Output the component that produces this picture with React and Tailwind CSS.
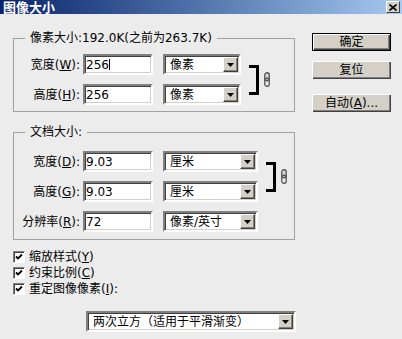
import React from 'react';

const FONT = "font-['DejaVu_Sans','Noto_Sans_CJK_SC',sans-serif]";

function DropArrow() {
  return (
    <div className="flex items-center justify-center w-[15px] h-[15px] mr-[1px] bg-[#d4d0c8] border border-t-white border-l-white border-b-[#404040] border-r-[#404040] shadow-[inset_-1px_-1px_0_#808080]">
      <svg width="7" height="4" viewBox="0 0 7 4">
        <polygon points="0,0 7,0 3.5,4" fill="#000" />
      </svg>
    </div>
  );
}

function Select({ value, className }) {
  return (
    <div
      className={`flex items-center h-[21px] bg-white border-2 border-t-[#808080] border-l-[#808080] border-b-white border-r-white shadow-[inset_1px_1px_0_#404040,inset_-1px_-1px_0_#d4d0c8] ${className}`}
    >
      <span className="flex-1 pl-[5px] leading-none whitespace-nowrap">{value}</span>
      <DropArrow />
    </div>
  );
}

function Field({ value, caret, className }) {
  return (
    <div
      className={`flex items-center h-[21px] w-[70px] bg-white border-2 border-t-[#808080] border-l-[#808080] border-b-white border-r-white shadow-[inset_1px_1px_0_#404040,inset_-1px_-1px_0_#d4d0c8] ${className}`}
    >
      <span className="pl-[1px] leading-none">{value}</span>
      {caret && <span className="w-px h-[11px] bg-black" />}
    </div>
  );
}

function Row({ label, keyChar, value, unit, selectWidth, caret }) {
  return (
    <div className="flex items-center h-[21px]">
      <span className="w-[66px] text-right whitespace-nowrap leading-none">
        {label}(<span className="underline">{keyChar}</span>):
      </span>
      <Field className="ml-[3px]" value={value} caret={caret} />
      <Select className={`ml-[10px] ${selectWidth}`} value={unit} />
    </div>
  );
}

function Link() {
  return (
    <svg width="6" height="15" viewBox="0 0 6 15">
      <rect x="0.75" y="0.75" width="4.5" height="8" rx="2.2" fill="#d8d8d8" stroke="#555" strokeWidth="1.3" />
      <rect x="0.75" y="6.25" width="4.5" height="8" rx="2.2" fill="none" stroke="#555" strokeWidth="1.3" />
    </svg>
  );
}

function Bracket({ className }) {
  return (
    <div className={`flex items-center ${className}`}>
      <div className="w-[10px] h-[30px] border-t-[3px] border-r-[3px] border-b-[3px] border-black" />
    </div>
  );
}

function Check({ label, keyChar, tail = '' }) {
  return (
    <div className="flex items-center h-[16px]">
      <div className="flex items-center justify-center w-[12px] h-[12px] bg-white border border-t-[#808080] border-l-[#808080] border-b-white border-r-white shadow-[inset_1px_1px_0_#404040]">
        <svg width="8" height="8" viewBox="0 0 8 8">
          <polyline points="1,3.5 3,5.5 7,1.5" fill="none" stroke="#000" strokeWidth="1.8" />
        </svg>
      </div>
      <span className="ml-[4px] leading-none whitespace-nowrap">
        {label}(<span className="underline">{keyChar}</span>){tail}
      </span>
    </div>
  );
}

function Button({ children, isDefault, className }) {
  return (
    <button
      className={`block w-[79px] h-[18px] bg-[#d4d0c8] leading-none text-center ${
        isDefault
          ? 'border border-black shadow-[inset_1px_1px_0_#fff,inset_-1px_-1px_0_#404040,inset_-2px_-2px_0_#808080]'
          : 'shadow-[inset_1px_1px_0_#fff,inset_-1px_-1px_0_#404040,inset_-2px_-2px_0_#808080]'
      } ${className}`}
    >
      {children}
    </button>
  );
}

export default function App() {
  return (
    <div className={`w-[402px] h-[339px] overflow-hidden bg-[#ececec] text-[12px] text-black ${FONT}`}>
      <div className="flex items-center justify-between h-[14px] pl-[3px] pr-[2px] bg-gradient-to-r from-[#0a246a] to-[#a6caf0]">
        <span className="text-white font-bold text-[13px] leading-none">图像大小</span>
        <div className="flex items-center justify-center w-[14px] h-[12px] bg-[#d4d0c8] border border-t-white border-l-white border-b-[#404040] border-r-[#404040]">
          <svg width="8" height="7" viewBox="0 0 8 7">
            <path d="M0.5 0.5 L7.5 6.5 M7.5 0.5 L0.5 6.5" stroke="#000" strokeWidth="1.6" />
          </svg>
        </div>
      </div>

      <div className="flex pl-[13px]">
        <div className="w-[283px] pt-[16px]">
          <fieldset className="w-[282px] border border-[#a0a0a0] pt-[8px] pb-[6px]">
            <legend className="ml-[11px] px-[5px] leading-[16px] whitespace-nowrap">
              像素大小:192.0K(之前为263.7K)
            </legend>
            <div className="flex">
              <div className="flex flex-col gap-[9px]">
                <Row label="宽度" keyChar="W" value="256" unit="像素" selectWidth="w-[78px]" caret />
                <Row label="高度" keyChar="H" value="256" unit="像素" selectWidth="w-[78px]" />
              </div>
              <Bracket className="ml-[8px]" />
              <div className="flex items-center ml-[5px]">
                <Link />
              </div>
            </div>
          </fieldset>

          <fieldset className="w-[282px] mt-[12px] border border-[#a0a0a0] pt-[11px] pb-[7px]">
            <legend className="ml-[11px] px-[5px] leading-[16px] whitespace-nowrap">文档大小:</legend>
            <div className="flex">
              <div className="flex flex-col gap-[9px]">
                <Row label="宽度" keyChar="D" value="9.03" unit="厘米" selectWidth="w-[95px]" />
                <Row label="高度" keyChar="G" value="9.03" unit="厘米" selectWidth="w-[95px]" />
                <Row label="分辨率" keyChar="R" value="72" unit="像素/英寸" selectWidth="w-[95px]" />
              </div>
              <div className="flex flex-col">
                <div className="flex h-[51px]">
                  <Bracket className="ml-[8px]" />
                  <div className="flex items-center ml-[5px]">
                    <Link />
                  </div>
                </div>
              </div>
            </div>
          </fieldset>

          <div className="mt-[9px] flex flex-col">
            <Check label="缩放样式" keyChar="Y" />
            <Check label="约束比例" keyChar="C" />
            <Check label="重定图像像素" keyChar="I" tail=":" />
          </div>

          <Select className="mt-[14px] ml-[73px] w-[210px]" value="两次立方（适用于平滑渐变）" />
        </div>

        <div className="ml-[16px] pt-[19px]">
          <Button isDefault>确定</Button>
          <Button className="mt-[10px]">复位</Button>
          <Button className="mt-[15px]">
            自动(<span className="underline">A</span>)...
          </Button>
        </div>
      </div>
    </div>
  );
}
